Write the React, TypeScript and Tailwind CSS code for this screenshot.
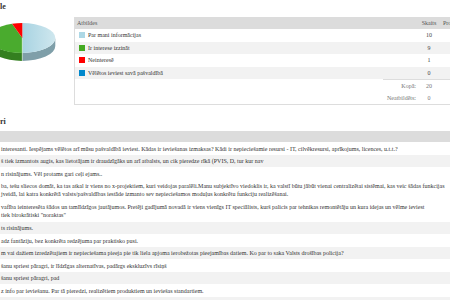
import React from 'react';

type Answer = { label: string; color: string; count: number };

const ANSWERS: Answer[] = [
  { label: 'Par mani informācijas', color: '#add8e6', count: 10 },
  { label: 'Ir interese izzināt', color: '#44aa22', count: 9 },
  { label: 'Neinteresē', color: '#ff0000', count: 1 },
  { label: 'Vēlētos ieviest savā pašvaldībā', color: '#0088cc', count: 0 },
];

// comment rows, each entry = lines of one row
const COMMENTS: { lines: string[]; shaded: boolean }[] = [
  {
    lines: [
      'interesanti. Iespējams vēlētos arī mūsu pašvaldībā ieviest. Kādas ir ieviešanas izmaksas? Kādi ir nepieciešamie resursi - IT, cilvēkresursi, aprīkojums, licences, u.t.t.?',
    ],
    shaded: false,
  },
  {
    lines: ['š tiek izmantots augis, kas lietotājam ir draudzīgāks un arī atbalsts, un cik pieredze rīkā (PVIS, D, tur kur nav'],
    shaded: true,
  },
  { lines: ['n risinājums. Vēl protams gari ceļi ejams..'], shaded: false },
  {
    lines: [
      'ba, tešu sliecos domāt, ka tas atkal ir viens no x-projektiem, kuri veidojas paralēli.Manu subjektīvo viedoklis ir, ka valstī būtu jābūt vienai centralizētai sistēmai, kas veic šādas funkcijas',
      'jveidā, lai katra konkrētā valsts/pašvaldības iestāde izmanto sev nepieciešamos moduļus konkrētu funkciju realizēšanai.',
    ],
    shaded: false,
  },
  {
    lines: [
      'vafība ieinteresēta šādos un tamlīdzīgos jautājumos. Pretēji gadījumā novadā ir viens vienīgs IT speciālists, kurš palicis par tehnikas remontētāju un kura idejas un vēlme ieviest',
      'tiek birokrātiski "noraktas"',
    ],
    shaded: false,
  },
  { lines: ['ts risinājums.'], shaded: true },
  { lines: ['adz fantāziju, bez konkrēta redzējuma par praktisko pusi.'], shaded: false },
  {
    lines: [
      'm vai dažiem izredzētajiem ir nepieciešama pieeja pie tik liela apjoma ierobežotas pieejamības datiem. Ko par to saka Valsts drošības policija?',
    ],
    shaded: true,
  },
  { lines: ['šanu spriest pāragri, ir līdzīgas alternatīvas, padārgs ekskluzīvs rīsiņš'], shaded: false },
  { lines: ['šanu spriest pāragri, pad'], shaded: true },
  { lines: ['z info par ieviešanu. Par tā pieredzi, realizētiem produktiem un ieviešas standartiem.'], shaded: false },
  { lines: [''], shaded: true },
];

const Pie = () => {
  const cx = 22.3;
  const cy = 21;
  const rx = 33;
  const ry = 15;
  const d = 8;
  const pt = (a: number, dy = 0) => {
    const r = (a * Math.PI) / 180;
    return `${cx + rx * Math.sin(r)} ${cy - ry * Math.cos(r) + dy}`;
  };
  const slice = (a1: number, a2: number) =>
    `M ${cx} ${cy} L ${pt(a1)} A ${rx} ${ry} 0 ${a2 - a1 > 180 ? 1 : 0} 1 ${pt(a2)} Z`;
  const side = (a1: number, a2: number) =>
    `M ${pt(a1)} A ${rx} ${ry} 0 0 1 ${pt(a2)} L ${pt(a2, d)} A ${rx} ${ry} 0 0 0 ${pt(a1, d)} Z`;

  return (
    <svg width="74" height="88" viewBox="0 0 74 88">
      <defs>
        <linearGradient id="blueTop" x1="0" x2="1" y1="0" y2="0">
          <stop offset="0" stopColor="#a8d3e2" />
          <stop offset="1" stopColor="#cfe7ee" />
        </linearGradient>
      </defs>
      <path d={side(90, 180)} fill="#7f9fa9" />
      <path d={side(180, 270)} fill="#347f20" />
      <path d={slice(0, 180)} fill="url(#blueTop)" />
      <path d={slice(180, 342)} fill="#4aab2e" />
      <path d={slice(342, 360)} fill="#ff0000" />
      <line x1={cx} y1={cy} x2={cx} y2={cy + ry + d} stroke="#e8f2f4" strokeWidth="0.6" />
    </svg>
  );
};

const Legend = () => {
  const total = ANSWERS.reduce((s, a) => s + a.count, 0);
  return (
    <div className="w-[400px] shrink-0 border-l border-b border-[#dddddd]">
      <div className="flex h-[12px] items-center bg-[#dcdcdc] text-[#555]">
        <div className="flex-1 pl-[2px]">Atbildes</div>
        <div className="w-[20px] text-center">Skaits</div>
        <div className="w-[35px] pl-[4px]">Procenti</div>
      </div>
      {ANSWERS.map((a, i) => (
        <div key={a.label} className={`flex h-[12.5px] items-center ${i % 2 ? 'bg-[#f2f2f2]' : 'bg-white'}`}>
          <div className="flex flex-1 items-center gap-[3px] pl-[4px]">
            <span className="h-[6px] w-[6px]" style={{ backgroundColor: a.color }} />
            <span>{a.label}</span>
          </div>
          <div className="w-[20px] text-center text-[#444]">{a.count}</div>
          <div className="w-[35px]" />
        </div>
      ))}
      <div className="flex h-[12.5px]">
        <div className="w-[308px]" />
        <div className="flex w-[36px] items-center justify-end border-t border-[#dddddd] pr-[3px] text-[#777]">Kopā:</div>
        <div className="flex w-[20px] items-center justify-center border-t border-[#dddddd] text-[#777]">{total}</div>
        <div className="flex-1 border-t border-[#dddddd]" />
      </div>
      <div className="flex h-[12.5px] items-center">
        <div className="w-[308px]" />
        <div className="w-[36px] pr-[3px] text-right text-[#777]">Neatbildēts:</div>
        <div className="w-[20px] text-center text-[#777]">0</div>
      </div>
    </div>
  );
};

export default function App() {
  return (
    <div className="h-[300px] w-[450px] overflow-hidden bg-white font-['Liberation_Serif',serif] text-[6px] leading-[8px] text-[#333]">
      <div className="h-[17px] pt-[2px] text-[8px] font-bold leading-[10px] text-[#333]">le</div>
      <div className="flex h-[88px]">
        <div className="w-[74px] shrink-0">
          <Pie />
        </div>
        <Legend />
      </div>
      <div className="h-[26px] pt-[12px] text-[8px] font-bold leading-[10px] text-[#333]">ri</div>
      <div className="h-[11.3px] bg-[#dcdcdc]" />
      {COMMENTS.map((c, i) => (
        <div
          key={i}
          className={`flex flex-col justify-center whitespace-nowrap pl-[1px] ${c.lines.length > 1 ? 'h-[21px]' : 'h-[12.5px]'} ${c.shaded ? 'bg-[#f2f2f2]' : 'bg-white'}`}
        >
          {c.lines.map((l, j) => (
            <div key={j}>{l}</div>
          ))}
        </div>
      ))}
    </div>
  );
}
